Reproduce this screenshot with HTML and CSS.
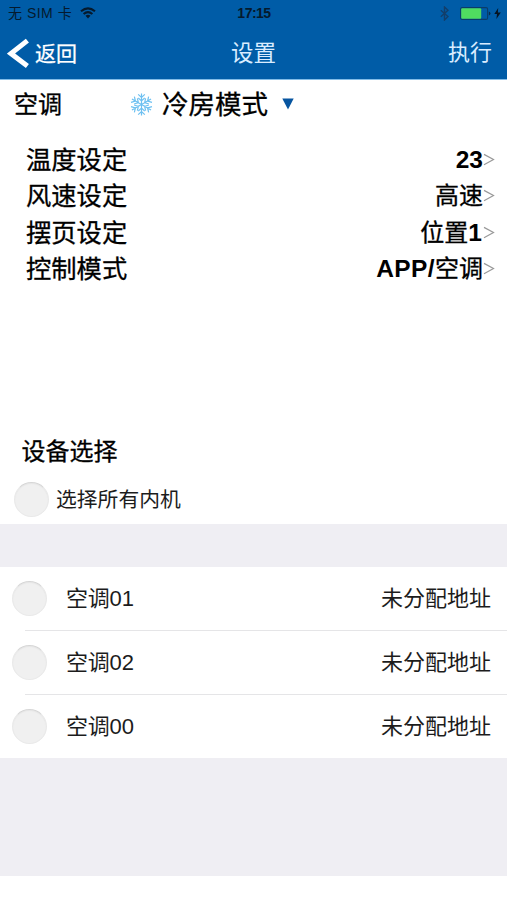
FILE: index.html
```html
<!DOCTYPE html>
<html lang="zh-CN">
<head>
<meta charset="utf-8">
<title>设置</title>
<link rel="stylesheet" href="styles.css">
</head>
<body>
<header class="header">
  <div class="status">
    <div class="status-left"><span>无 SIM 卡</span>
      <svg class="wifi" viewBox="0 0 16 12"><g fill="none" stroke="#051a2d" stroke-width="2.1"><path d="M1 4.2Q8-1.6 15 4.2"/><path d="M3.6 7Q8 3.2 12.4 7"/></g><path fill="#051a2d" d="M8 11.5L5.5 8.8Q8 6.9 10.5 8.8Z"/></svg>
    </div>
    <div class="time">17:15</div>
    <div class="status-right">
      <svg class="bluetooth" viewBox="0 0 9 15"><path d="M.8 4.2L8 10.5L4.5 14V1L8 4.3L.8 10.8" fill="none" stroke="#123e6a" stroke-width="1.4"/></svg>
      <svg class="battery" viewBox="0 0 31 13"><rect x=".6" y=".6" width="27" height="11.8" rx="1.5" fill="none" stroke="#0b3c68" stroke-width="1.1"/><rect x="1.2" y="1.2" width="20" height="10.6" rx="1" fill="#50dc60"/><path d="M28.8 4.5Q30.5 5 30.5 6.5T28.8 8.5Z" fill="#082b4b"/></svg>
      <svg class="bolt" viewBox="0 0 7 11"><path d="M4.2 0L.3 6H3L2.4 11L6.8 4.5H3.9Z" fill="#051423"/></svg>
    </div>
  </div>
  <nav class="nav">
    <div class="back"><svg class="back-icon" viewBox="0 0 22 30"><path d="M20.4 2.6L4 15.6L20.4 28" fill="none" stroke="#fff" stroke-width="5"/></svg><span>返回</span></div>
    <div class="title">设置</div>
    <div class="action">执行</div>
  </nav>
</header>
<main>
  <section class="settings">
    <div class="mode">
      <span class="mode-label">空调</span>
      <svg class="snow" viewBox="-12 -12 24 24"><defs><g id="arm"><path d="M0 0V-11.5M-3.5-10.6L0-7.3L3.5-10.6M-3.4-6.9L0-3.8L3.4-6.9"/></g></defs><g fill="none" stroke="#6dc0f1" stroke-width="1.25"><use href="#arm"/><use href="#arm" transform="rotate(60)"/><use href="#arm" transform="rotate(120)"/><use href="#arm" transform="rotate(180)"/><use href="#arm" transform="rotate(240)"/><use href="#arm" transform="rotate(300)"/></g></svg>
      <span class="mode-name">冷房模式</span>
      <svg class="arrow" viewBox="0 0 12 12"><path d="M.3 .5H11.7L6 11.5Z" fill="#0755a0"/></svg>
    </div>
    <div class="options">
      <div class="option"><span>温度设定</span><span class="value"><b>23</b></span><svg class="chevron" viewBox="0 0 12 14"><path d="M1 1.4L10.5 6.5L1 11.7"/></svg></div>
      <div class="option"><span>风速设定</span><span class="value">高速</span><svg class="chevron" viewBox="0 0 12 14"><path d="M1 1.4L10.5 6.5L1 11.7"/></svg></div>
      <div class="option"><span>摆页设定</span><span class="value shifted">位置<b>1</b></span><svg class="chevron" viewBox="0 0 12 14"><path d="M1 1.4L10.5 6.5L1 11.7"/></svg></div>
      <div class="option"><span>控制模式</span><span class="value"><b class="wide">APP/</b>空调</span><svg class="chevron" viewBox="0 0 12 14"><path d="M1 1.4L10.5 6.5L1 11.7"/></svg></div>
    </div>
  </section>
  <section class="selection">
    <h2>设备选择</h2>
    <div class="select-all"><i class="radio"></i><span>选择所有内机</span></div>
  </section>
  <section class="devices">
    <div class="device"><i class="radio"></i><span class="name">空调01</span><span class="address">未分配地址</span></div>
    <div class="device"><i class="radio"></i><span class="name">空调02</span><span class="address">未分配地址</span></div>
    <div class="device"><i class="radio"></i><span class="name">空调00</span><span class="address">未分配地址</span></div>
  </section>
</main>
</body>
</html>
```
FILE: styles.css
```css
* { box-sizing: border-box; }
body { margin: 0; height: 900px; overflow: hidden; background: #fff; color: #1c1c1c; font-family: "Liberation Sans", "Noto Sans CJK SC", sans-serif; }
svg { display: block; flex: none; }
.header { height: 80px; background: #005ca7; border-bottom: 1px solid #81bce8; }
.status { height: 27px; display: grid; grid-template-columns: 1fr auto 1fr; align-items: center; padding: 0 6px 0 8px; color: #051a2d; line-height: 27px; }
.status-left { display: flex; align-items: center; gap: 8px; white-space: nowrap; }
.status-left span { font-size: 14px; letter-spacing: .5px; }
.wifi { width: 16px; height: 12px; margin-top: -1px; }
.time { font-weight: bold; font-size: 14px; letter-spacing: -.5px; padding-right: 1px; }
.status-right { display: flex; align-items: center; justify-content: flex-end; }
.bluetooth { width: 9px; height: 15px; margin-right: 11px; }
.battery { width: 31px; height: 13px; margin-right: 3px; }
.bolt { width: 7px; height: 11px; }
.nav { height: 52px; display: grid; grid-template-columns: 1fr auto 1fr; line-height: 52px; color: #d9ecff; font-size: 22px; }
.back { height: 52px; display: flex; align-items: center; padding-left: 7px; color: #fff; font-size: 21px; -webkit-text-stroke: .25px; }
.back span { padding-top: 2px; }
.back-icon { width: 22px; height: 30px; margin-right: 6px; }
.title { font-size: 22.5px; padding-top: 1px; }
.action { text-align: right; padding-right: 15px; }
.settings { height: 347px; padding-top: 1px; }
.mode { height: 48px; display: flex; align-items: center; padding-left: 14px; line-height: 48px; color: #000; -webkit-text-stroke: .3px; }
.mode-label { width: 116px; font-size: 24px; }
.snow { width: 23px; height: 23px; margin-top: -2px; }
.mode-name { margin-left: 9px; width: 120px; font-size: 26.5px; }
.arrow { width: 12px; height: 12px; margin-top: -3px; }
.options { padding: 12.4px 12px 0 26px; }
.option { height: 36.6px; display: flex; align-items: center; line-height: 36px; font-size: 25.3px; color: #000; -webkit-text-stroke: .3px; }
.value { margin-left: auto; font-size: 24px; }
.value b { font-size: 24.5px; -webkit-text-stroke: 0; }
.value .wide { letter-spacing: .4px; }
.shifted { padding-right: 1px; }
.chevron { width: 12px; height: 14px; fill: none; stroke: #999; stroke-width: 1.2; }
.selection { height: 97px; }
h2 { margin: 0; padding-left: 21.5px; height: 49px; line-height: 49px; font-size: 24px; font-weight: normal; color: #000; -webkit-text-stroke: .3px; }
.select-all { display: flex; align-items: center; padding-left: 14px; height: 47px; line-height: 48px; font-size: 20.8px; }
.select-all span { padding-top: 1px; }
.radio { flex: none; width: 35px; height: 35px; border-radius: 50%; background: #f0f0f0; border: 1px solid #e9e9e9; border-top-color: #d6d6d6; box-shadow: inset 0 1px 1px #e6e6e6; }
.select-all .radio { margin-right: 7px; }
.devices { height: 352px; background: #efeef3; padding-top: 43px; }
.device { height: 63.8px; display: flex; align-items: center; padding: 0 16px 0 12px; font-size: 22px; line-height: 63px; background: linear-gradient(#e5e5e7, #e5e5e7) 25px 100% / 100% 1px no-repeat #fff; }
.device:last-child { background: #fff; }
.name { margin-left: 19px; letter-spacing: -.2px; }
.address { margin-left: auto; }
```
